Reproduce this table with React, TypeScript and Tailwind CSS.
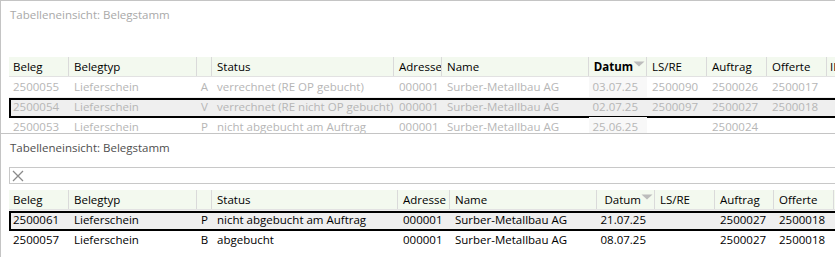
type Col = { label: string; align?: "left" | "center" | "right"; sorted?: boolean };

const COLS: Col[] = [
  { label: "Beleg" },
  { label: "Belegtyp" },
  { label: "", align: "center" },
  { label: "Status" },
  { label: "Adresse" },
  { label: "Name" },
  { label: "Datum", align: "right", sorted: true },
  { label: "LS/RE" },
  { label: "Auftrag" },
  { label: "Offerte" },
];

const UPPER_ROWS = [
  ["2500055", "Lieferschein", "A", "verrechnet (RE OP gebucht)", "000001", "Surber-Metallbau AG", "03.07.25", "2500090", "2500026", "2500017"],
  ["2500054", "Lieferschein", "V", "verrechnet (RE nicht OP gebucht)", "000001", "Surber-Metallbau AG", "02.07.25", "2500097", "2500027", "2500018"],
  ["2500053", "Lieferschein", "P", "nicht abgebucht am Auftrag", "000001", "Surber-Metallbau AG", "25.06.25", "", "2500024", ""],
];

const LOWER_ROWS = [
  ["2500061", "Lieferschein", "P", "nicht abgebucht am Auftrag", "000001", "Surber-Metallbau AG", "21.07.25", "", "2500027", "2500018"],
  ["2500057", "Lieferschein", "B", "abgebucht", "000001", "Surber-Metallbau AG", "08.07.25", "", "2500027", "2500018"],
];

function SortArrow() {
  return (
    <svg width="12" height="6" viewBox="0 0 12 6" className="absolute right-[1px] top-[4px]">
      <path d="M0.5 0.5 L11.5 0.5 L6 5.5 Z" fill="#bcbcbc" />
    </svg>
  );
}

function cellAlign(c: Col) {
  if (c.align === "right") return "justify-end pr-[9px]";
  if (c.align === "center") return "justify-center";
  return "pl-[5px]";
}

function Grid({
  rows,
  selected,
  dim,
  gridClass,
  boldSort,
  shadeSorted,
  extraHeader,
}: {
  rows: string[][];
  selected: number;
  dim: boolean;
  gridClass: string;
  boldSort: boolean;
  shadeSorted: boolean;
  extraHeader?: string;
}) {
  return (
    <div className="ml-[8px] w-[840px]">
      {/* header */}
      <div className={`grid ${gridClass} h-[20px] bg-[#f3f9ef] border-b border-[#e2e2e2] text-black`}>
        {COLS.map((c, i) => (
          <div
            key={i}
            className={`relative flex items-center border-r border-[#dadada] whitespace-nowrap overflow-hidden ${
              c.sorted ? "justify-end pr-[13px]" : i === 0 ? "pl-[4px]" : cellAlign(c)
            } ${c.sorted && boldSort ? "font-bold" : ""}`}
          >
            {c.label}
            {c.sorted && <SortArrow />}
          </div>
        ))}
        <div className="flex items-center pl-[3px] whitespace-nowrap overflow-hidden">{extraHeader}</div>
      </div>

      {/* rows */}
      {rows.map((r, ri) => (
        <div
          key={ri}
          className={`relative grid ${gridClass} h-[20px] ${ri === selected ? "bg-[#efefef]" : ""} ${
            dim ? "text-[#b6b6b6]" : "text-black"
          }`}
        >
          {r.map((v, ci) => (
            <div
              key={ci}
              className={`flex items-center whitespace-nowrap overflow-hidden ${
                ci === 0 ? "pl-[4px]" : cellAlign(COLS[ci])
              } ${shadeSorted && COLS[ci].sorted && ri !== selected ? "bg-[#f8f8f8]" : ""}`}
            >
              {v}
            </div>
          ))}
          <div />
          {ri === selected && (
            <div className="absolute left-0 -right-[20px] top-[1px] -bottom-[1px] border-2 border-black pointer-events-none" />
          )}
        </div>
      ))}
    </div>
  );
}

export default function App() {
  return (
    <div className="w-[835px] h-[257px] overflow-hidden bg-white font-['Open_Sans',sans-serif] text-[11.5px] leading-none">
      {/* upper view, greyed out */}
      <div className="h-[134px] overflow-hidden border-t border-l border-b border-[#c4c4c4]">
        <div className="pl-[9px] pt-[6px] h-[16px] flex items-center text-[#a9a9a9] box-content">
          Tabelleneinsicht: Belegstamm
        </div>
        <div className="mt-[34px]">
          <Grid
            rows={UPPER_ROWS}
            selected={1}
            dim
            boldSort
            shadeSorted
            extraHeader="II"
            gridClass="grid-cols-[60px_128px_15px_182px_48px_147px_58px_60px_60px_60px_1fr]"
          />
        </div>
      </div>

      {/* lower view, active */}
      <div className="h-[123px] overflow-hidden border-l border-[#c4c4c4]">
        <div className="pl-[9px] pt-[6px] h-[16px] flex items-center text-[#4e4e4e] box-content">
          Tabelleneinsicht: Belegstamm
        </div>
        <div className="mt-[11px] ml-[8px] h-[17px] border border-[#c8c8c8] flex items-center pl-[2px] w-[840px]">
          <svg width="12" height="12" viewBox="0 0 12 12">
            <path d="M1 1 L11 11 M11 1 L1 11" stroke="#8a8a8a" strokeWidth="1.3" />
          </svg>
        </div>
        <div className="mt-[6px]">
          <Grid
            rows={LOWER_ROWS}
            selected={0}
            dim={false}
            boldSort={false}
            shadeSorted={false}
            gridClass="grid-cols-[60px_128px_15px_186px_52px_147px_58px_60px_59px_60px_1fr]"
          />
        </div>
      </div>
    </div>
  );
}
